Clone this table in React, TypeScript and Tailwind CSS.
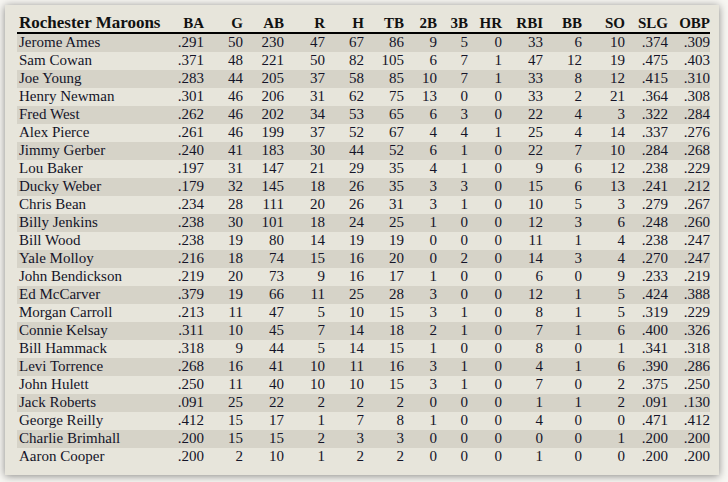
const cols = [
  { label: "Rochester Maroons", w: "w-[147px]" },
  { label: "BA", w: "w-[40px]" },
  { label: "G", w: "w-[39px]" },
  { label: "AB", w: "w-[41px]" },
  { label: "R", w: "w-[41px]" },
  { label: "H", w: "w-[39px]" },
  { label: "TB", w: "w-[40px]" },
  { label: "2B", w: "w-[33px]" },
  { label: "3B", w: "w-[31px]" },
  { label: "HR", w: "w-[34px]" },
  { label: "RBI", w: "w-[41px]" },
  { label: "BB", w: "w-[39px]" },
  { label: "SO", w: "w-[43px]" },
  { label: "SLG", w: "w-[43px]" },
  { label: "OBP", w: "w-[42px]" },
];

const rows = `Jerome Ames|.291 50 230 47 67 86 9 5 0 33 6 10 .374 .309
Sam Cowan|.371 48 221 50 82 105 6 7 1 47 12 19 .475 .403
Joe Young|.283 44 205 37 58 85 10 7 1 33 8 12 .415 .310
Henry Newman|.301 46 206 31 62 75 13 0 0 33 2 21 .364 .308
Fred West|.262 46 202 34 53 65 6 3 0 22 4 3 .322 .284
Alex Pierce|.261 46 199 37 52 67 4 4 1 25 4 14 .337 .276
Jimmy Gerber|.240 41 183 30 44 52 6 1 0 22 7 10 .284 .268
Lou Baker|.197 31 147 21 29 35 4 1 0 9 6 12 .238 .229
Ducky Weber|.179 32 145 18 26 35 3 3 0 15 6 13 .241 .212
Chris Bean|.234 28 111 20 26 31 3 1 0 10 5 3 .279 .267
Billy Jenkins|.238 30 101 18 24 25 1 0 0 12 3 6 .248 .260
Bill Wood|.238 19 80 14 19 19 0 0 0 11 1 4 .238 .247
Yale Molloy|.216 18 74 15 16 20 0 2 0 14 3 4 .270 .247
John Bendickson|.219 20 73 9 16 17 1 0 0 6 0 9 .233 .219
Ed McCarver|.379 19 66 11 25 28 3 0 0 12 1 5 .424 .388
Morgan Carroll|.213 11 47 5 10 15 3 1 0 8 1 5 .319 .229
Connie Kelsay|.311 10 45 7 14 18 2 1 0 7 1 6 .400 .326
Bill Hammack|.318 9 44 5 14 15 1 0 0 8 0 1 .341 .318
Levi Torrence|.268 16 41 10 11 16 3 1 0 4 1 6 .390 .286
John Hulett|.250 11 40 10 10 15 3 1 0 7 0 2 .375 .250
Jack Roberts|.091 25 22 2 2 2 0 0 0 1 1 2 .091 .130
George Reilly|.412 15 17 1 7 8 1 0 0 4 0 0 .471 .412
Charlie Brimhall|.200 15 15 2 3 3 0 0 0 0 0 1 .200 .200
Aaron Cooper|.200 2 10 1 2 2 0 0 0 1 0 0 .200 .200`
  .split("\n")
  .map((line) => {
    const [name, stats] = line.split("|");
    return { name, stats: stats.split(" ") };
  });

export default function App() {
  return (
    <div className="w-[728px] h-[482px] bg-[#f7f6f2] p-[5px] overflow-hidden">
      <div
        className="w-[714px] h-[470px] bg-[#e7e5db] shadow-[0_1px_8px_rgba(0,0,0,0.45)] pl-[12px] pt-[9px] text-[#141428] leading-none"
        style={{ fontFamily: '"Liberation Serif", serif' }}
      >
        {/* Header */}
        <div className="flex h-[20px] items-end border-b-2 border-black w-[693px] pb-[1px] font-bold text-[#111]">
          {cols.map((c, i) => (
            <div
              key={c.label}
              className={`${c.w} shrink-0 ${
                i === 0 ? "text-left pl-[2px] text-[17px]" : "text-right text-[15px]"
              }`}
            >
              {c.label}
            </div>
          ))}
        </div>

        {/* Rows */}
        <div className="w-[693px] text-[15px]">
          {rows.map((r, idx) => (
            <div
              key={r.name}
              className={`flex h-[18px] items-center pb-[1px] ${
                idx % 2 === 0 ? "bg-[#d6d3c8]" : "bg-[#e7e5db]"
              }`}
            >
              <div className="w-[147px] shrink-0 pl-[2px] whitespace-nowrap">{r.name}</div>
              {r.stats.map((s, j) => (
                <div key={j} className={`${cols[j + 1].w} shrink-0 text-right`}>
                  {s}
                </div>
              ))}
            </div>
          ))}
        </div>
      </div>
    </div>
  );
}
